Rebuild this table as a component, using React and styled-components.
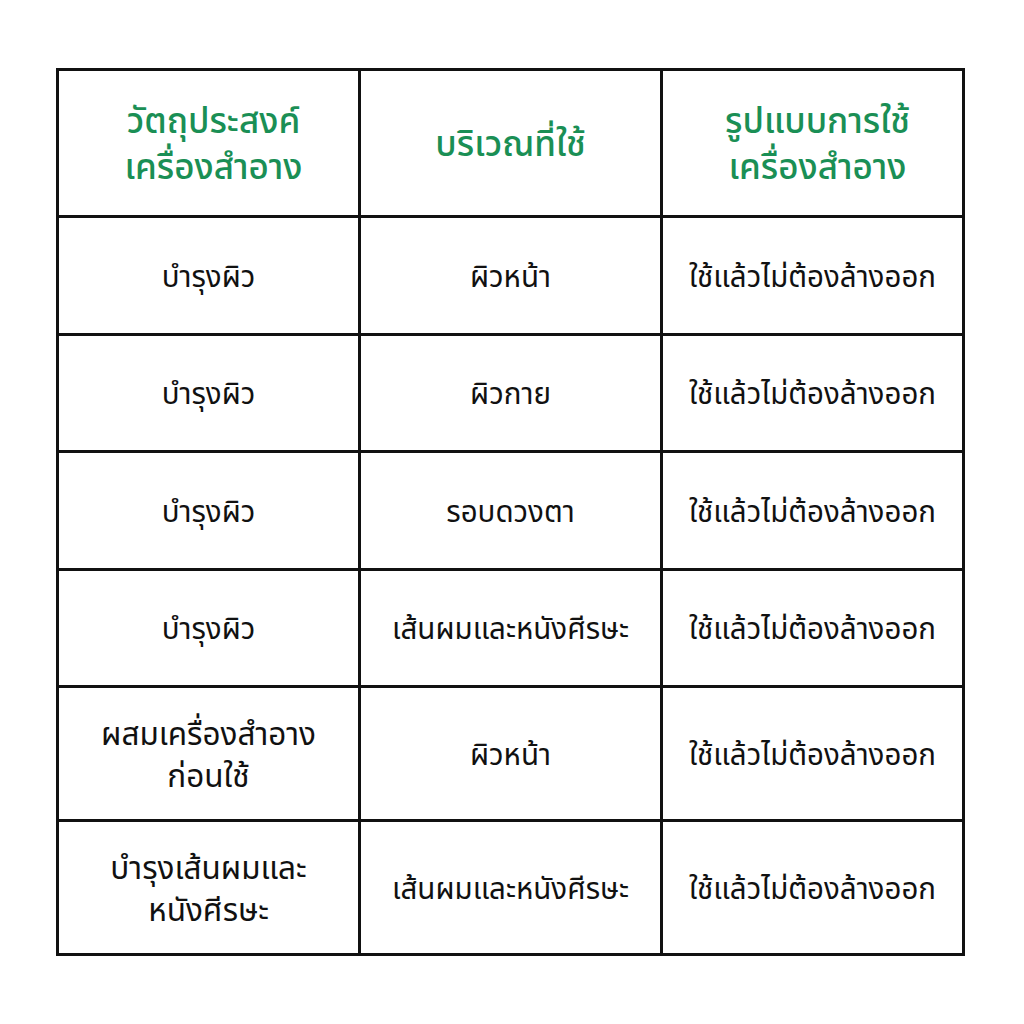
import React from "react";
import styled, { createGlobalStyle } from "styled-components";

const GlobalStyle = createGlobalStyle`
  html, body {
    margin: 0;
    padding: 0;
    background: #ffffff;
  }
  body {
    font-family: "Noto Sans", "Noto Sans Thai", "DejaVu Sans", sans-serif;
  }
`;

const Page = styled.div`
  width: 1024px;
  height: 1024px;
  padding: 68px 0 0 56px;
  box-sizing: border-box;
`;

const Table = styled.table`
  border-collapse: collapse;
  table-layout: fixed;
  width: 909px;
`;

const HeadCell = styled.th`
  border: 3px solid #111;
  height: 144px;
  padding: 0 6px 0 ${(p) => (p.$shift ? 16 : 6)}px;
  color: #1a8f55;
  font-weight: 500;
  font-size: 35px;
  line-height: 46px;
  text-align: center;
  vertical-align: middle;
`;

const Cell = styled.td`
  border: 3px solid #111;
  height: ${(p) => p.$h}px;
  padding: 0 4px;
  color: #111;
  font-size: ${(p) => (p.$big ? 31.5 : 29.5)}px;
  line-height: 42px;
  text-align: center;
  vertical-align: middle;
  white-space: nowrap;
`;

const rows = [
  { h: 115, cells: ["บำรุงผิว", "ผิวหน้า", "ใช้แล้วไม่ต้องล้างออก"] },
  { h: 114, cells: ["บำรุงผิว", "ผิวกาย", "ใช้แล้วไม่ต้องล้างออก"] },
  { h: 115, cells: ["บำรุงผิว", "รอบดวงตา", "ใช้แล้วไม่ต้องล้างออก"] },
  { h: 114, cells: ["บำรุงผิว", "เส้นผมและหนังศีรษะ", "ใช้แล้วไม่ต้องล้างออก"] },
  { h: 131, cells: [["ผสมเครื่องสำอาง", "ก่อนใช้"], "ผิวหน้า", "ใช้แล้วไม่ต้องล้างออก"] },
  { h: 131, cells: [["บำรุงเส้นผมและ", "หนังศีรษะ"], "เส้นผมและหนังศีรษะ", "ใช้แล้วไม่ต้องล้างออก"] },
];

function Lines({ value }) {
  if (!Array.isArray(value)) return value;
  return value.map((line, i) => (
    <React.Fragment key={i}>
      {i > 0 && <br />}
      {line}
    </React.Fragment>
  ));
}

export default function App() {
  return (
    <>
      <GlobalStyle />
      <Page>
        <Table>
          <thead>
            <tr>
              <HeadCell $shift>
                วัตถุประสงค์
                <br />
                เครื่องสำอาง
              </HeadCell>
              <HeadCell>บริเวณที่ใช้</HeadCell>
              <HeadCell $shift>
                รูปแบบการใช้
                <br />
                เครื่องสำอาง
              </HeadCell>
            </tr>
          </thead>
          <tbody>
            {rows.map((row, r) => (
              <tr key={r}>
                {row.cells.map((c, i) => (
                  <Cell key={i} $h={row.h} $big={Array.isArray(c)}>
                    <Lines value={c} />
                  </Cell>
                ))}
              </tr>
            ))}
          </tbody>
        </Table>
      </Page>
    </>
  );
}
